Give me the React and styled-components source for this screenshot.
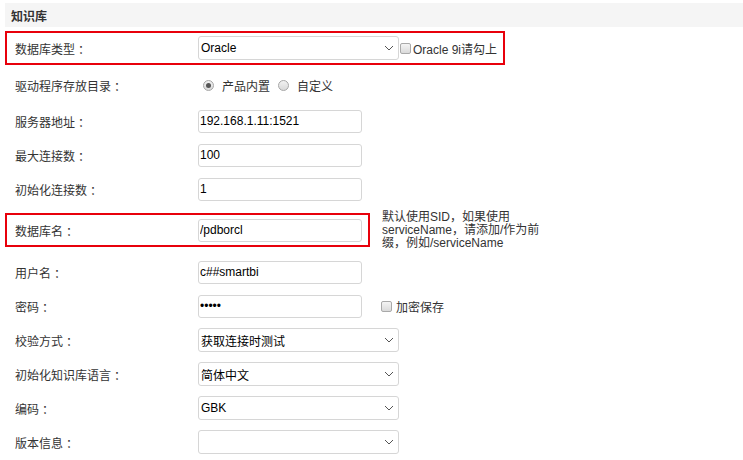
import React from 'react'
import styled, { createGlobalStyle } from 'styled-components'

const GlobalStyle = createGlobalStyle`
    body {
        margin: 0;
        background: #fff;
        font-family: "Liberation Sans", "Noto Sans CJK SC", sans-serif;
        font-size: 12px;
        color: #333;
    }
`

const Chevron = () => (
    <svg width="10" height="6" viewBox="0 0 10 6">
        <path d="M1 1 L5 5 L9 1" fill="none" stroke="#555" strokeWidth="1" />
    </svg>
)

const App = () => {
  return (
    <>
    <GlobalStyle />
    <Page>
        <SectionHeader>知识库</SectionHeader>

        <Row $gap={4}>
            <Frame $highlight $w={500}>
                <Label>数据库类型<Colon>：</Colon></Label>
                <SelectBox><span>Oracle</span><Chevron /></SelectBox>
                <Check $tight />
                <CheckText $tight>Oracle 9i请勾上</CheckText>
            </Frame>
        </Row>

        <Row $gap={3}>
            <Frame>
                <Label>驱动程序存放目录<Colon>：</Colon></Label>
                <RadioGroup>
                    <Radio $checked />
                    <RadioText>产品内置</RadioText>
                    <Radio />
                    <RadioText>自定义</RadioText>
                </RadioGroup>
            </Frame>
        </Row>

        <Row $gap={2}>
            <Frame>
                <Label>服务器地址<Colon>：</Colon></Label>
                <TextInput readOnly defaultValue="192.168.1.11:1521" />
            </Frame>
        </Row>

        <Row>
            <Frame>
                <Label>最大连接数<Colon>：</Colon></Label>
                <TextInput readOnly defaultValue="100" />
            </Frame>
        </Row>

        <Row>
            <Frame>
                <Label>初始化连接数<Colon>：</Colon></Label>
                <TextInput readOnly defaultValue="1" />
            </Frame>
        </Row>

        <Row $gap={7}>
            <Frame $highlight>
                <Label>数据库名<Colon>：</Colon></Label>
                <TextInput readOnly defaultValue="/pdborcl" />
            </Frame>
            <Help>
                默认使用SID，如果使用<br />
                serviceName，请添加/作为前<br />
                缀，例如/serviceName
            </Help>
        </Row>

        <Row $gap={8}>
            <Frame>
                <Label>用户名<Colon>：</Colon></Label>
                <TextInput readOnly defaultValue="c##smartbi" />
            </Frame>
        </Row>

        <Row>
            <Frame>
                <Label>密码<Colon>：</Colon></Label>
                <TextInput type="password" readOnly defaultValue="12345" />
            </Frame>
            <Check />
            <CheckText>加密保存</CheckText>
        </Row>

        <Row>
            <Frame>
                <Label>校验方式<Colon>：</Colon></Label>
                <SelectBox><span>获取连接时测试</span><Chevron /></SelectBox>
            </Frame>
        </Row>

        <Row>
            <Frame>
                <Label>初始化知识库语言<Colon>：</Colon></Label>
                <SelectBox><span>简体中文</span><Chevron /></SelectBox>
            </Frame>
        </Row>

        <Row>
            <Frame>
                <Label>编码<Colon>：</Colon></Label>
                <SelectBox><span>GBK</span><Chevron /></SelectBox>
            </Frame>
        </Row>

        <Row>
            <Frame>
                <Label>版本信息<Colon>：</Colon></Label>
                <SelectBox><span></span><Chevron /></SelectBox>
            </Frame>
        </Row>
    </Page>
    </>
  )
}

export default App;


const Page = styled.div`
    padding: 3px 0 0 5px;
`

const SectionHeader = styled.div`
    height: 24px;
    display: flex;
    align-items: center;
    padding-left: 6px;
    background: #f5f5f5;
    font-weight: bold;
    color: #333;
`

const Row = styled.div`
    display: flex;
    align-items: center;
    height: 34px;
    margin-top: ${p => p.$gap || 0}px;
`

const Frame = styled.div`
    display: flex;
    align-items: center;
    box-sizing: border-box;
    height: 34px;
    min-width: 365px;
    width: ${p => p.$w ? p.$w + 'px' : 'auto'};
    padding: 0 4px 0 8px;
    border: 2px solid ${p => p.$highlight ? '#e8000b' : 'transparent'};
`

const Label = styled.div`
    width: 183px;
    flex-shrink: 0;
    color: #333;
`

const Colon = styled.span`
    margin-left: 3px;
`

const TextInput = styled.input`
    box-sizing: border-box;
    width: 164px;
    height: 23px;
    padding: 0 1px;
    border: 1px solid #d6d6d6;
    border-radius: 3px;
    font-family: "Liberation Sans", "Noto Sans CJK SC", sans-serif;
    font-size: 12px;
    color: #000;
    background: #fff;
    outline: none;
`

const SelectBox = styled.div`
    box-sizing: border-box;
    width: 201px;
    height: 24px;
    flex-shrink: 0;
    display: flex;
    align-items: center;
    justify-content: space-between;
    padding: 0 4px 0 2px;
    border: 1px solid #d6d6d6;
    border-radius: 3px;
    color: #000;
    background: #fff;
`

const Check = styled.span`
    box-sizing: border-box;
    width: 11px;
    height: 11px;
    flex-shrink: 0;
    margin-left: ${p => p.$tight ? 1 : 11}px;
    border: 1px solid #a9a9a9;
    border-radius: 2px;
    background: linear-gradient(#f4f4f4, #dadada);
`

const CheckText = styled.span`
    margin-left: ${p => p.$tight ? 2 : 4}px;
    white-space: nowrap;
    color: #333;
`

const RadioGroup = styled.div`
    display: flex;
    align-items: center;
    margin-left: 5px;
`

const Radio = styled.span`
    position: relative;
    box-sizing: border-box;
    width: 11px;
    height: 11px;
    border-radius: 50%;
    border: 1px solid #a6a6a6;
    background: linear-gradient(#f2f2f2, #d9d9d9);

    &::after {
        content: '';
        display: ${p => p.$checked ? 'block' : 'none'};
        position: absolute;
        top: 2px;
        left: 2px;
        width: 5px;
        height: 5px;
        border-radius: 50%;
        background: #555;
    }
`

const RadioText = styled.span`
    margin: 0 8px 0 8px;
    color: #333;
`

const Help = styled.div`
    margin-left: 12px;
    font-size: 12px;
    line-height: 13px;
    color: #333;
    white-space: nowrap;
`
